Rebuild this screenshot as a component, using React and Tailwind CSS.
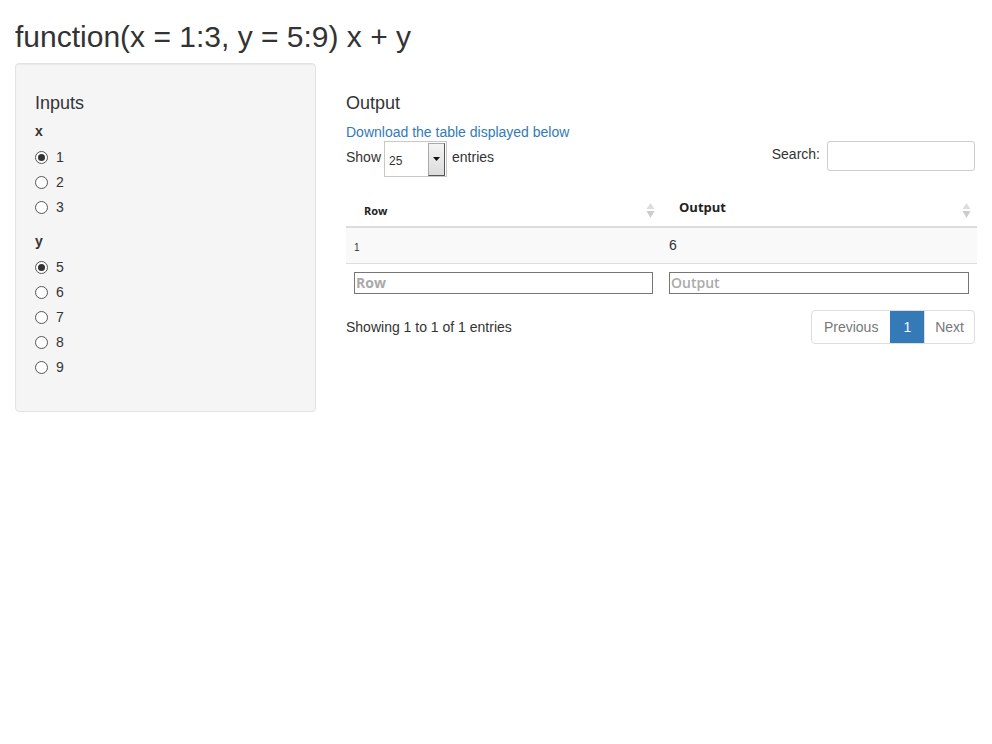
import React from "react";

const font = { fontFamily: '"Liberation Sans", Arial, sans-serif' };

function Radio({ label, checked }) {
  return (
    <div className="flex items-center h-[25px]">
      <span className="relative w-[13px] h-[13px] rounded-full border border-[#555] bg-white flex items-center justify-center">
        {checked && <span className="w-[7px] h-[7px] rounded-full bg-[#333]" />}
      </span>
      <span className="ml-[8px] text-[14px] text-[#333]">{label}</span>
    </div>
  );
}

function RadioGroup({ name, options, selected }) {
  return (
    <div className="mb-[11px]">
      <div className="text-[14px] font-bold text-[#333] h-[20px] leading-[20px] mb-[4px]">{name}</div>
      {options.map((o) => (
        <Radio key={o} label={o} checked={o === selected} />
      ))}
    </div>
  );
}

function SortIcon() {
  return (
    <svg width="9" height="15" viewBox="0 0 9 15" className="shrink-0">
      <path d="M4.5 0 L8.5 6 L0.5 6 Z" fill="#ddd" />
      <path d="M4.5 15 L8.5 8 L0.5 8 Z" fill="#ccc" />
    </svg>
  );
}

export default function App() {
  return (
    <div className="min-h-screen bg-white text-[#333] px-[15px]" style={font}>
      <h2 className="text-[30px] leading-[33px] mt-[20px] mb-[10px] text-[#333]">
        function(x = 1:3, y = 5:9) x + y
      </h2>

      <div className="flex">
        {/* Sidebar */}
        <div className="w-[301px] shrink-0">
          <div className="bg-[#f5f5f5] border border-[#e3e3e3] rounded-[4px] px-[19px] pt-[29px] pb-[20px] shadow-[inset_0_1px_1px_rgba(0,0,0,.05)]">
            <h4 className="text-[18px] leading-[20px] mb-[8px]">Inputs</h4>
            <RadioGroup name="x" options={["1", "2", "3"]} selected="1" />
            <RadioGroup name="y" options={["5", "6", "7", "8", "9"]} selected="5" />
          </div>
        </div>

        {/* Main */}
        <div className="flex-1 pl-[30px] pt-[30px]">
          <h4 className="text-[18px] leading-[20px] mb-[9px]">Output</h4>
          <a className="text-[14px] text-[#337ab7] leading-[20px] block">Download the table displayed below</a>

          <div className="flex justify-between items-start -mt-[1px]">
            <div className="flex items-center text-[14px]">
              <span className="-mt-[3px]">Show</span>
              <div className="ml-[3px] w-[63px] h-[36px] border border-[#c8c8c8] bg-white flex items-center">
                <span className="pl-[4px] text-[12px] flex-1 mt-[3px]">25</span>
                <span className="w-[17px] h-[33px] mr-[1px] bg-gradient-to-b from-[#f4f4f4] to-[#dcdcdc] border border-[#aaa] border-r-[#555] border-b-[#555] flex items-center justify-center">
                  <svg width="7" height="4" viewBox="0 0 7 4">
                    <path d="M0 0 L7 0 L3.5 4 Z" fill="#111" />
                  </svg>
                </span>
              </div>
              <span className="ml-[5px] -mt-[3px]">entries</span>
            </div>
            <div className="flex items-center text-[14px] mr-[2px]">
              <span className="-mt-[4px]">Search:</span>
              <div className="ml-[7px] w-[148px] h-[30px] border border-[#ccc] rounded-[3px] bg-white" />
            </div>
          </div>

          {/* Table */}
          <div className="mt-[17px]">
            <div className="flex h-[34px] border-b-2 border-[#ddd]">
              <div className="w-[315px] flex items-center justify-between pl-[18px] pr-[6px]" style={{ fontFamily: '"Open Sans", sans-serif' }}>
                <span className="text-[11px] font-bold text-[#222] mt-[2px]">Row</span>
                <SortIcon />
              </div>
              <div className="flex-1 flex items-center justify-between pl-[18px] pr-[6px]" style={{ fontFamily: '"Open Sans", sans-serif' }}>
                <span className="text-[13px] font-bold text-[#222] -mt-[4px]">Output</span>
                <SortIcon />
              </div>
            </div>
            <div className="flex h-[36px] bg-[#f9f9f9] border-b border-[#ddd]">
              <div className="w-[315px] flex items-center pl-[8px] text-[10px] mt-[4px]">1</div>
              <div className="flex-1 flex items-center pl-[8px] text-[14px] -mt-[1px]">6</div>
            </div>
            <div className="flex pt-[7px] pb-[2px]">
              <div className="w-[315px] pl-[8px] pr-[8px]">
                <input
                  placeholder="Row"
                  className="w-full h-[22px] border border-[#767676] px-[1px] text-[14px] font-bold placeholder:text-[#aaa] outline-none"
                  style={{ fontFamily: '"Open Sans", sans-serif' }}
                />
              </div>
              <div className="flex-1 pl-[8px] pr-[8px]">
                <input
                  placeholder="Output"
                  className="w-full h-[22px] border border-[#767676] px-[1px] text-[14px] font-semibold placeholder:text-[#aaa] outline-none"
                  style={{ fontFamily: '"Open Sans", sans-serif' }}
                />
              </div>
            </div>
          </div>

          <div className="flex justify-between items-center mt-[13px]">
            <div className="text-[14px]">Showing 1 to 1 of 1 entries</div>
            <div className="flex h-[34px] text-[14px] border border-[#ddd] rounded-[4px] overflow-hidden mr-[2px]">
              <span className="px-[12px] flex items-center text-[#777]">Previous</span>
              <span className="px-[13px] flex items-center bg-[#337ab7] text-white">1</span>
              <span className="px-[10px] flex items-center text-[#777] border-l border-[#ddd]">Next</span>
            </div>
          </div>
        </div>
      </div>
    </div>
  );
}
